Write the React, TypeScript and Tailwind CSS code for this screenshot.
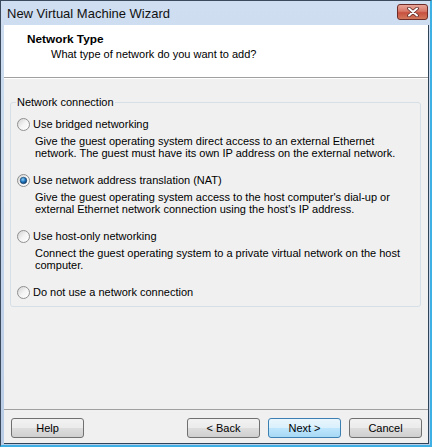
import React from "react";

const options = [
  {
    label: "Use bridged networking",
    lines: [
      "Give the guest operating system direct access to an external Ethernet",
      "network. The guest must have its own IP address on the external network.",
    ],
  },
  {
    label: "Use network address translation (NAT)",
    checked: true,
    lines: [
      "Give the guest operating system access to the host computer's dial-up or",
      "external Ethernet network connection using the host's IP address.",
    ],
  },
  {
    label: "Use host-only networking",
    lines: [
      "Connect the guest operating system to a private virtual network on the host",
      "computer.",
    ],
  },
  {
    label: "Do not use a network connection",
    lines: [],
  },
];

function Radio({ checked }: { checked?: boolean }) {
  return (
    <svg width="13" height="13" viewBox="0 0 13 13" className="shrink-0">
      <defs>
        <linearGradient id="radioFill" x1="0" y1="0" x2="1" y2="1">
          <stop offset="0" stopColor="#cfcfcf" />
          <stop offset="0.5" stopColor="#f4f4f4" />
          <stop offset="1" stopColor="#ffffff" />
        </linearGradient>
        <radialGradient id="radioDot" cx="40%" cy="35%" r="65%">
          <stop offset="0" stopColor="#8fd0f5" />
          <stop offset="0.55" stopColor="#1f77c0" />
          <stop offset="1" stopColor="#0b3a6e" />
        </radialGradient>
      </defs>
      <circle cx="6.5" cy="6.5" r="6" fill="url(#radioFill)" stroke="#8e8f8f" />
      {checked && <circle cx="6.5" cy="6.5" r="3.3" fill="url(#radioDot)" stroke="#1a3f66" strokeWidth="0.6" />}
    </svg>
  );
}

function WizButton({ label, primary }: { label: string; primary?: boolean }) {
  return (
    <div
      className={`w-[73px] h-[20px] flex items-center justify-center rounded-[3px] border text-[11px] text-black ${
        primary
          ? "border-[#3c7fb1] bg-[linear-gradient(#eaf6fd_0%,#d9f0fc_50%,#bee6fd_51%,#a7d9f5_100%)]"
          : "border-[#707070] bg-[linear-gradient(#f2f2f2_0%,#ebebeb_50%,#dddddd_51%,#cfcfcf_100%)]"
      }`}
    >
      {label}
    </div>
  );
}

export default function App() {
  return (
    <div className="w-[432px] h-[447px] flex flex-col bg-[linear-gradient(#cfdef1,#b9cde6)] border-l border-t border-[#3b4a5c] border-r-2 border-r-[#3fb0e4] border-b-2 border-b-[#3fb0e4] font-['Liberation_Sans',Arial,sans-serif] text-black">
      {/* Title bar */}
      <div className="h-[24px] flex items-center justify-between pl-[6px] pr-[2px] shrink-0">
        <span className="text-[13px] leading-none text-[#111]">New Virtual Machine Wizard</span>
        <div className="self-start mt-[3px] w-[31px] h-[16px] rounded-[3px] border border-[#6d2c28] bg-[linear-gradient(#e8a598_0%,#d77868_45%,#c7503f_55%,#d2785a_100%)] flex items-center justify-center">
          <svg width="12" height="10" viewBox="0 0 12 10">
            <path d="M2 1.5 L10 8.5 M10 1.5 L2 8.5" stroke="#5a2a26" strokeWidth="3.6" strokeLinecap="round" />
            <path d="M2 1.5 L10 8.5 M10 1.5 L2 8.5" stroke="#ffffff" strokeWidth="2" strokeLinecap="round" />
          </svg>
        </div>
      </div>

      {/* Client area */}
      <div className="flex-1 ml-[3px] mr-[1px] mb-[1px] flex flex-col bg-[#f0f0f0] border-r border-b border-[#2f4359]">
        {/* Header */}
        <div className="h-[53px] bg-white border-b border-[#a0a0a0] pl-[23px] pt-[7px] shrink-0">
          <div className="text-[11.8px] font-bold leading-[14px]">Network Type</div>
          <div className="mt-[2px] ml-[24px] text-[11px] leading-[13px]">What type of network do you want to add?</div>
        </div>

        {/* Body */}
        <div className="flex-1 border-t border-white pl-[6px] pr-[7px] pt-[17px]">
          <fieldset className="border border-[#d5dfe5] rounded-[3px] pl-[6px] pb-[6px]">
            <legend className="px-[1px] -ml-[1px] text-[11px] leading-[13px]">Network connection</legend>
            <div className="pt-[7px] flex flex-col gap-[13px]">
              {options.map((o) => (
                <div key={o.label}>
                  <div className="h-[16px] flex items-center gap-[3px]">
                    <Radio checked={o.checked} />
                    <span className="text-[11px] leading-[13px]">{o.label}</span>
                  </div>
                  {o.lines.length > 0 && (
                    <div className="mt-[3px] pl-[18px] text-[11px] leading-[12px]">
                      {o.lines.map((l) => (
                        <div key={l} className="whitespace-nowrap">{l}</div>
                      ))}
                    </div>
                  )}
                </div>
              ))}
            </div>
          </fieldset>
        </div>

        {/* Footer */}
        <div className="h-[34px] shrink-0 border-t border-[#a0a0a0] flex items-start pt-[8px] pl-[7px] pr-[6px]">
          <WizButton label="Help" />
          <div className="flex-1" />
          <div className="flex gap-[8px]">
            <WizButton label="< Back" />
            <WizButton label="Next >" primary />
            <WizButton label="Cancel" />
          </div>
        </div>
      </div>
    </div>
  );
}
